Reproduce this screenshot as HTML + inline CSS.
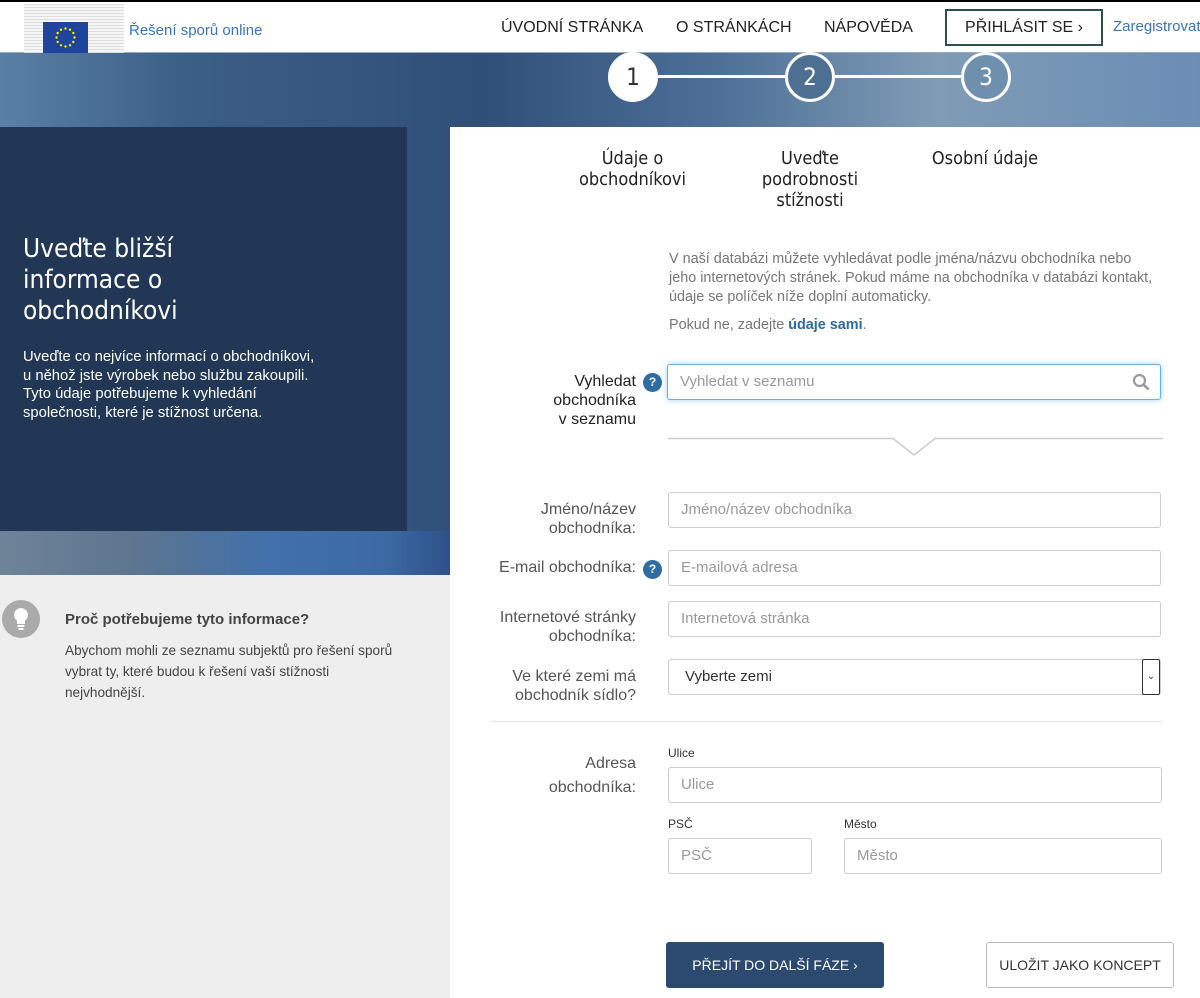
<!DOCTYPE html>
<html><head><meta charset="utf-8">
<style>
*{box-sizing:border-box;margin:0;padding:0}
body{width:1200px;height:998px;overflow:hidden;position:relative;font-family:"Liberation Sans",Arial,sans-serif;background:#eee}
.a{position:absolute}
.hdr{left:0;top:0;width:1200px;height:53px;background:#fff;border-top:2px solid #000;border-bottom:1px solid #9ab}
.band{left:0;top:53px;width:1200px;height:522px;background:linear-gradient(90deg,#5a80a6 0%,#3c5f86 15%,#2f4f78 40%,#4e7098 60%,#7f9cb6 78%,#6b8db5 100%)}
.band2{left:0;top:531px;width:450px;height:44px;background:linear-gradient(90deg,#6f8398 0%,#5d7590 30%,#4170aa 60%,#3d6aa5 85%,#2d5188 100%)}
.dark{left:0;top:127px;width:407px;height:404px;background:#213755;color:#fff}
.white{left:450px;top:127px;width:750px;height:871px;background:#fff}
.nav{top:17px;font-size:16px;color:#222}
.circ{width:50px;height:50px;border-radius:50%;border:3px solid #fff;color:#fff;font-size:24px;text-align:center;line-height:44px;top:52px;font-family:"DejaVu Sans Condensed","Liberation Sans",sans-serif}
.step{top:148px;font-size:18px;color:#222;text-align:center;line-height:21px;font-family:"DejaVu Sans Condensed","Liberation Sans",sans-serif}
.lbl{font-size:16px;color:#555;text-align:right;line-height:19px}
.inp{height:36px;border:1px solid #ccc;border-radius:3px;background:#fff;font-size:15px;color:#999;padding-left:12px;line-height:34px}
.q{width:19px;height:19px;border-radius:50%;background:#2e6ca4;color:#fff;font-size:12px;font-weight:bold;text-align:center;line-height:19px}
.sm{font-size:12px;color:#333}
</style></head><body>
<div class="a hdr">
  <div class="a" style="left:24px;top:2px;width:100px;height:49px;background:repeating-linear-gradient(180deg,#ddd 0 1px,#f6f6f6 1px 3px)"></div>
  <div class="a" style="left:43px;top:20px;width:45px;height:31px;background:#1e449c">
    <svg width="45" height="31"><g fill="#ffed00">
    <circle cx="22.5" cy="6.5" r="1.2"/><circle cx="27" cy="7.7" r="1.2"/><circle cx="30.3" cy="11" r="1.2"/><circle cx="31.5" cy="15.5" r="1.2"/><circle cx="30.3" cy="20" r="1.2"/><circle cx="27" cy="23.3" r="1.2"/><circle cx="22.5" cy="24.5" r="1.2"/><circle cx="18" cy="23.3" r="1.2"/><circle cx="14.7" cy="20" r="1.2"/><circle cx="13.5" cy="15.5" r="1.2"/><circle cx="14.7" cy="11" r="1.2"/><circle cx="18" cy="7.7" r="1.2"/></g></svg>
  </div>
  <div class="a" style="left:129px;top:20px;font-size:15px;color:#3b76b6">Řešení sporů online</div>
  <div class="a nav" style="left:501px">ÚVODNÍ STRÁNKA</div>
  <div class="a nav" style="left:676px">O STRÁNKÁCH</div>
  <div class="a nav" style="left:824px">NÁPOVĚDA</div>
  <div class="a" style="left:945px;top:7px;width:158px;height:37px;border:2px solid #2f4f4f;font-size:16px;color:#222;text-align:center;line-height:33px">PŘIHLÁSIT SE ›</div>
  <div class="a" style="left:1113px;top:16px;font-size:15px;color:#3b76b6">Zaregistrovat</div>
</div>
<div class="a band"></div>
<div class="a band2"></div>
<div class="a" style="left:655px;top:75px;width:320px;height:3px;background:#fff"></div>
<div class="a circ" style="left:608px;background:#fff;color:#333">1</div>
<div class="a circ" style="left:785px;background:#4d6f92">2</div>
<div class="a circ" style="left:961px;background:#6f8fae">3</div>
<div class="a dark">
  <div class="a" style="left:23px;top:107px;font-size:26px;line-height:31px;font-family:'DejaVu Sans Condensed','Liberation Sans',sans-serif">Uveďte bližší<br>informace o<br>obchodníkovi</div>
  <div class="a" style="left:23px;top:221px;font-size:14.8px;line-height:18.5px">Uveďte co nejvíce informací o obchodníkovi,<br>u něhož jste výrobek nebo službu zakoupili.<br>Tyto údaje potřebujeme k vyhledání<br>společnosti, které je stížnost určena.</div>
</div>
<div class="a" style="left:2px;top:600px;width:38px;height:38px;border-radius:50%;background:#aaa">
  <svg width="38" height="38"><path d="M19 8a7 7 0 0 0-4 12.7V24h8v-3.3A7 7 0 0 0 19 8z" fill="#fff"/><rect x="15.5" y="25" width="7" height="2" fill="#fff"/><rect x="16.5" y="28" width="5" height="2" fill="#fff"/></svg>
</div>
<div class="a" style="left:65px;top:611px;font-size:15px;font-weight:bold;color:#444">Proč potřebujeme tyto informace?</div>
<div class="a" style="left:65px;top:640px;font-size:13.6px;line-height:21px;color:#444">Abychom mohli ze seznamu subjektů pro řešení sporů<br>vybrat ty, které budou k řešení vaší stížnosti<br>nejvhodnější.</div>
<div class="a white"></div>
<div class="a step" style="left:560px;width:145px">Údaje o<br>obchodníkovi</div>
<div class="a step" style="left:740px;width:140px">Uveďte<br>podrobnosti<br>stížnosti</div>
<div class="a step" style="left:915px;width:140px">Osobní údaje</div>
<div class="a" style="left:669px;top:250px;font-size:14.4px;line-height:19px;color:#777">V naší databázi můžete vyhledávat podle jména/názvu obchodníka nebo<br>jeho internetových stránek. Pokud máme na obchodníka v databázi kontakt,<br>údaje se políček níže doplní automaticky.</div>
<div class="a" style="left:669px;top:317px;font-size:14.4px;color:#777">Pokud ne, zadejte <b style="color:#2e6ca4">údaje sami</b>.</div>
<div class="a lbl" style="left:490px;top:372px;width:146px;color:#222">Vyhledat<br>obchodníka<br>v seznamu</div>
<div class="a q" style="left:643px;top:373px">?</div>
<div class="a inp" style="left:667px;top:364px;width:494px;height:36px;border-color:#66afe9;box-shadow:0 0 6px rgba(102,175,233,.6)">Vyhledat v seznamu
 <svg class="a" style="right:10px;top:8px" width="18" height="18"><circle cx="7.5" cy="7.5" r="5.5" fill="none" stroke="#999" stroke-width="2.2"/><path d="M11.5 11.5l5 5" stroke="#999" stroke-width="2.6"/></svg></div>
<svg class="a" style="left:668px;top:436px" width="495" height="22"><path d="M0 2.5H225L246 19 267 2.5H495" fill="none" stroke="#ccc" stroke-width="1.5"/></svg>
<div class="a lbl" style="left:490px;top:500px;width:146px">Jméno/název<br>obchodníka:</div>
<div class="a inp" style="left:668px;top:492px;width:493px">Jméno/název obchodníka</div>
<div class="a lbl" style="left:470px;top:558px;width:166px">E-mail obchodníka:</div>
<div class="a q" style="left:643px;top:560px">?</div>
<div class="a inp" style="left:668px;top:550px;width:493px">E-mailová adresa</div>
<div class="a lbl" style="left:470px;top:608px;width:166px">Internetové stránky<br>obchodníka:</div>
<div class="a inp" style="left:668px;top:601px;width:493px">Internetová stránka</div>
<div class="a lbl" style="left:470px;top:667px;width:166px">Ve které zemi má<br>obchodník sídlo?</div>
<div class="a inp" style="left:668px;top:659px;width:493px;color:#333;padding-left:16px">Vyberte zemi
 <div class="a" style="right:0;top:-1px;width:18px;height:36px;border:1px solid #333;border-radius:2px;font-size:10px;text-align:center;line-height:34px;color:#333">⌄</div></div>
<div class="a" style="left:490px;top:721px;width:672px;height:1px;background:#e5e5e5"></div>
<div class="a lbl" style="left:490px;top:752px;width:146px;line-height:24px">Adresa<br>obchodníka:</div>
<div class="a sm" style="left:668px;top:746px">Ulice</div>
<div class="a inp" style="left:668px;top:767px;width:494px">Ulice</div>
<div class="a sm" style="left:668px;top:817px">PSČ</div>
<div class="a inp" style="left:668px;top:838px;width:144px">PSČ</div>
<div class="a sm" style="left:844px;top:817px">Město</div>
<div class="a inp" style="left:844px;top:838px;width:318px">Město</div>
<div class="a" style="left:666px;top:942px;width:218px;height:46px;background:#2c4a6f;border-radius:3px;color:#fff;font-size:14px;text-align:center;line-height:46px">PŘEJÍT DO DALŠÍ FÁZE ›</div>
<div class="a" style="left:986px;top:942px;width:188px;height:46px;border:1px solid #bbb;border-radius:3px;background:#fff;color:#333;font-size:14px;text-align:center;line-height:44px">ULOŽIT JAKO KONCEPT</div>
</body></html>
